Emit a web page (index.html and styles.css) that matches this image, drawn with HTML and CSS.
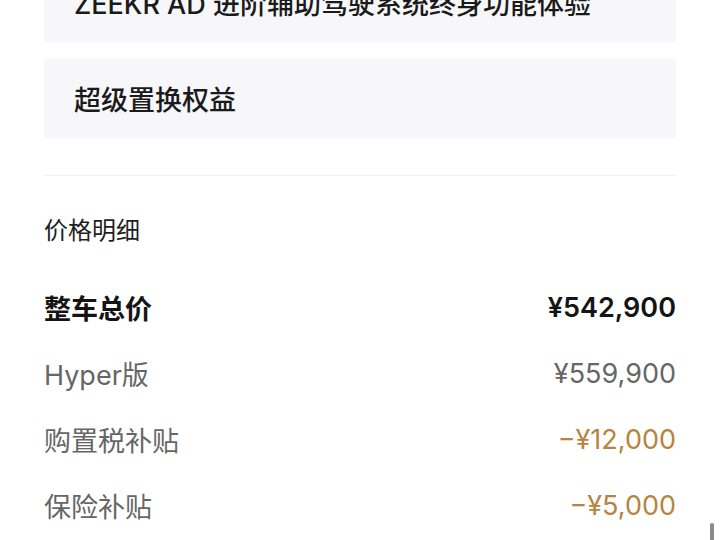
FILE: index.html
```
<!DOCTYPE html>
<html lang="zh-CN">
<head>
<meta charset="utf-8">
<title>价格明细</title>
<link rel="stylesheet" href="styles.css">
</head>
<body>
<div class="page">
  <div class="benefits">
    <div class="card">ZEEKR AD 进阶辅助驾驶系统终身功能体验</div>
    <div class="card">超级置换权益</div>
  </div>
  <div class="divider"></div>
  <div class="section-title">价格明细</div>
  <div class="rows">
    <div class="row total"><span>整车总价</span><span class="amount">¥542,900</span></div>
    <div class="row muted"><span>Hyper版</span><span>¥559,900</span></div>
    <div class="row discount"><span>购置税补贴</span><span class="amount">−¥12,000</span></div>
    <div class="row discount"><span>保险补贴</span><span class="amount">−¥5,000</span></div>
  </div>
</div>
<div class="scroll-thumb"></div>
</body>
</html>
```
FILE: styles.css
```
html, body {
  margin: 0;
  padding: 0;
  background: #ffffff;
  overflow: hidden;
  height: 540px;
}
body {
  font-family: Inter, "Noto Sans CJK SC", sans-serif;
  color: #161616;
  position: relative;
}
.page {
  padding: 0 44px;
}
.benefits {
  display: flex;
  flex-direction: column;
  gap: 16px;
  margin-top: -38px;
}
.card {
  height: 80px;
  background: #f7f7fa;
  border-radius: 4px;
  padding: 0 30px;
  display: flex;
  align-items: center;
  font-size: 27px;
  font-weight: 500;
  color: #1a1a1a;
}
.divider {
  margin-top: 37px;
  height: 1px;
  background: #f1f1f3;
}
.section-title {
  margin-top: 37px;
  line-height: 36px;
  font-size: 24px;
  color: #1e1e1e;
}
.rows {
  margin-top: 25px;
  display: flex;
  flex-direction: column;
}
.row {
  height: 66px;
  display: flex;
  align-items: center;
  justify-content: space-between;
  font-size: 27px;
}
.row.total {
  font-weight: 700;
  color: #141414;
}
.row.total .amount {
  font-weight: 600;
}
.row.muted {
  color: #666666;
}
.row.discount {
  color: #666666;
}
.row.discount .amount {
  color: #b5853f;
}
.scroll-thumb {
  position: absolute;
  right: 6px;
  top: 523px;
  width: 4px;
  height: 30px;
  border-radius: 2px;
  background: #8a8a8a;
}
```
